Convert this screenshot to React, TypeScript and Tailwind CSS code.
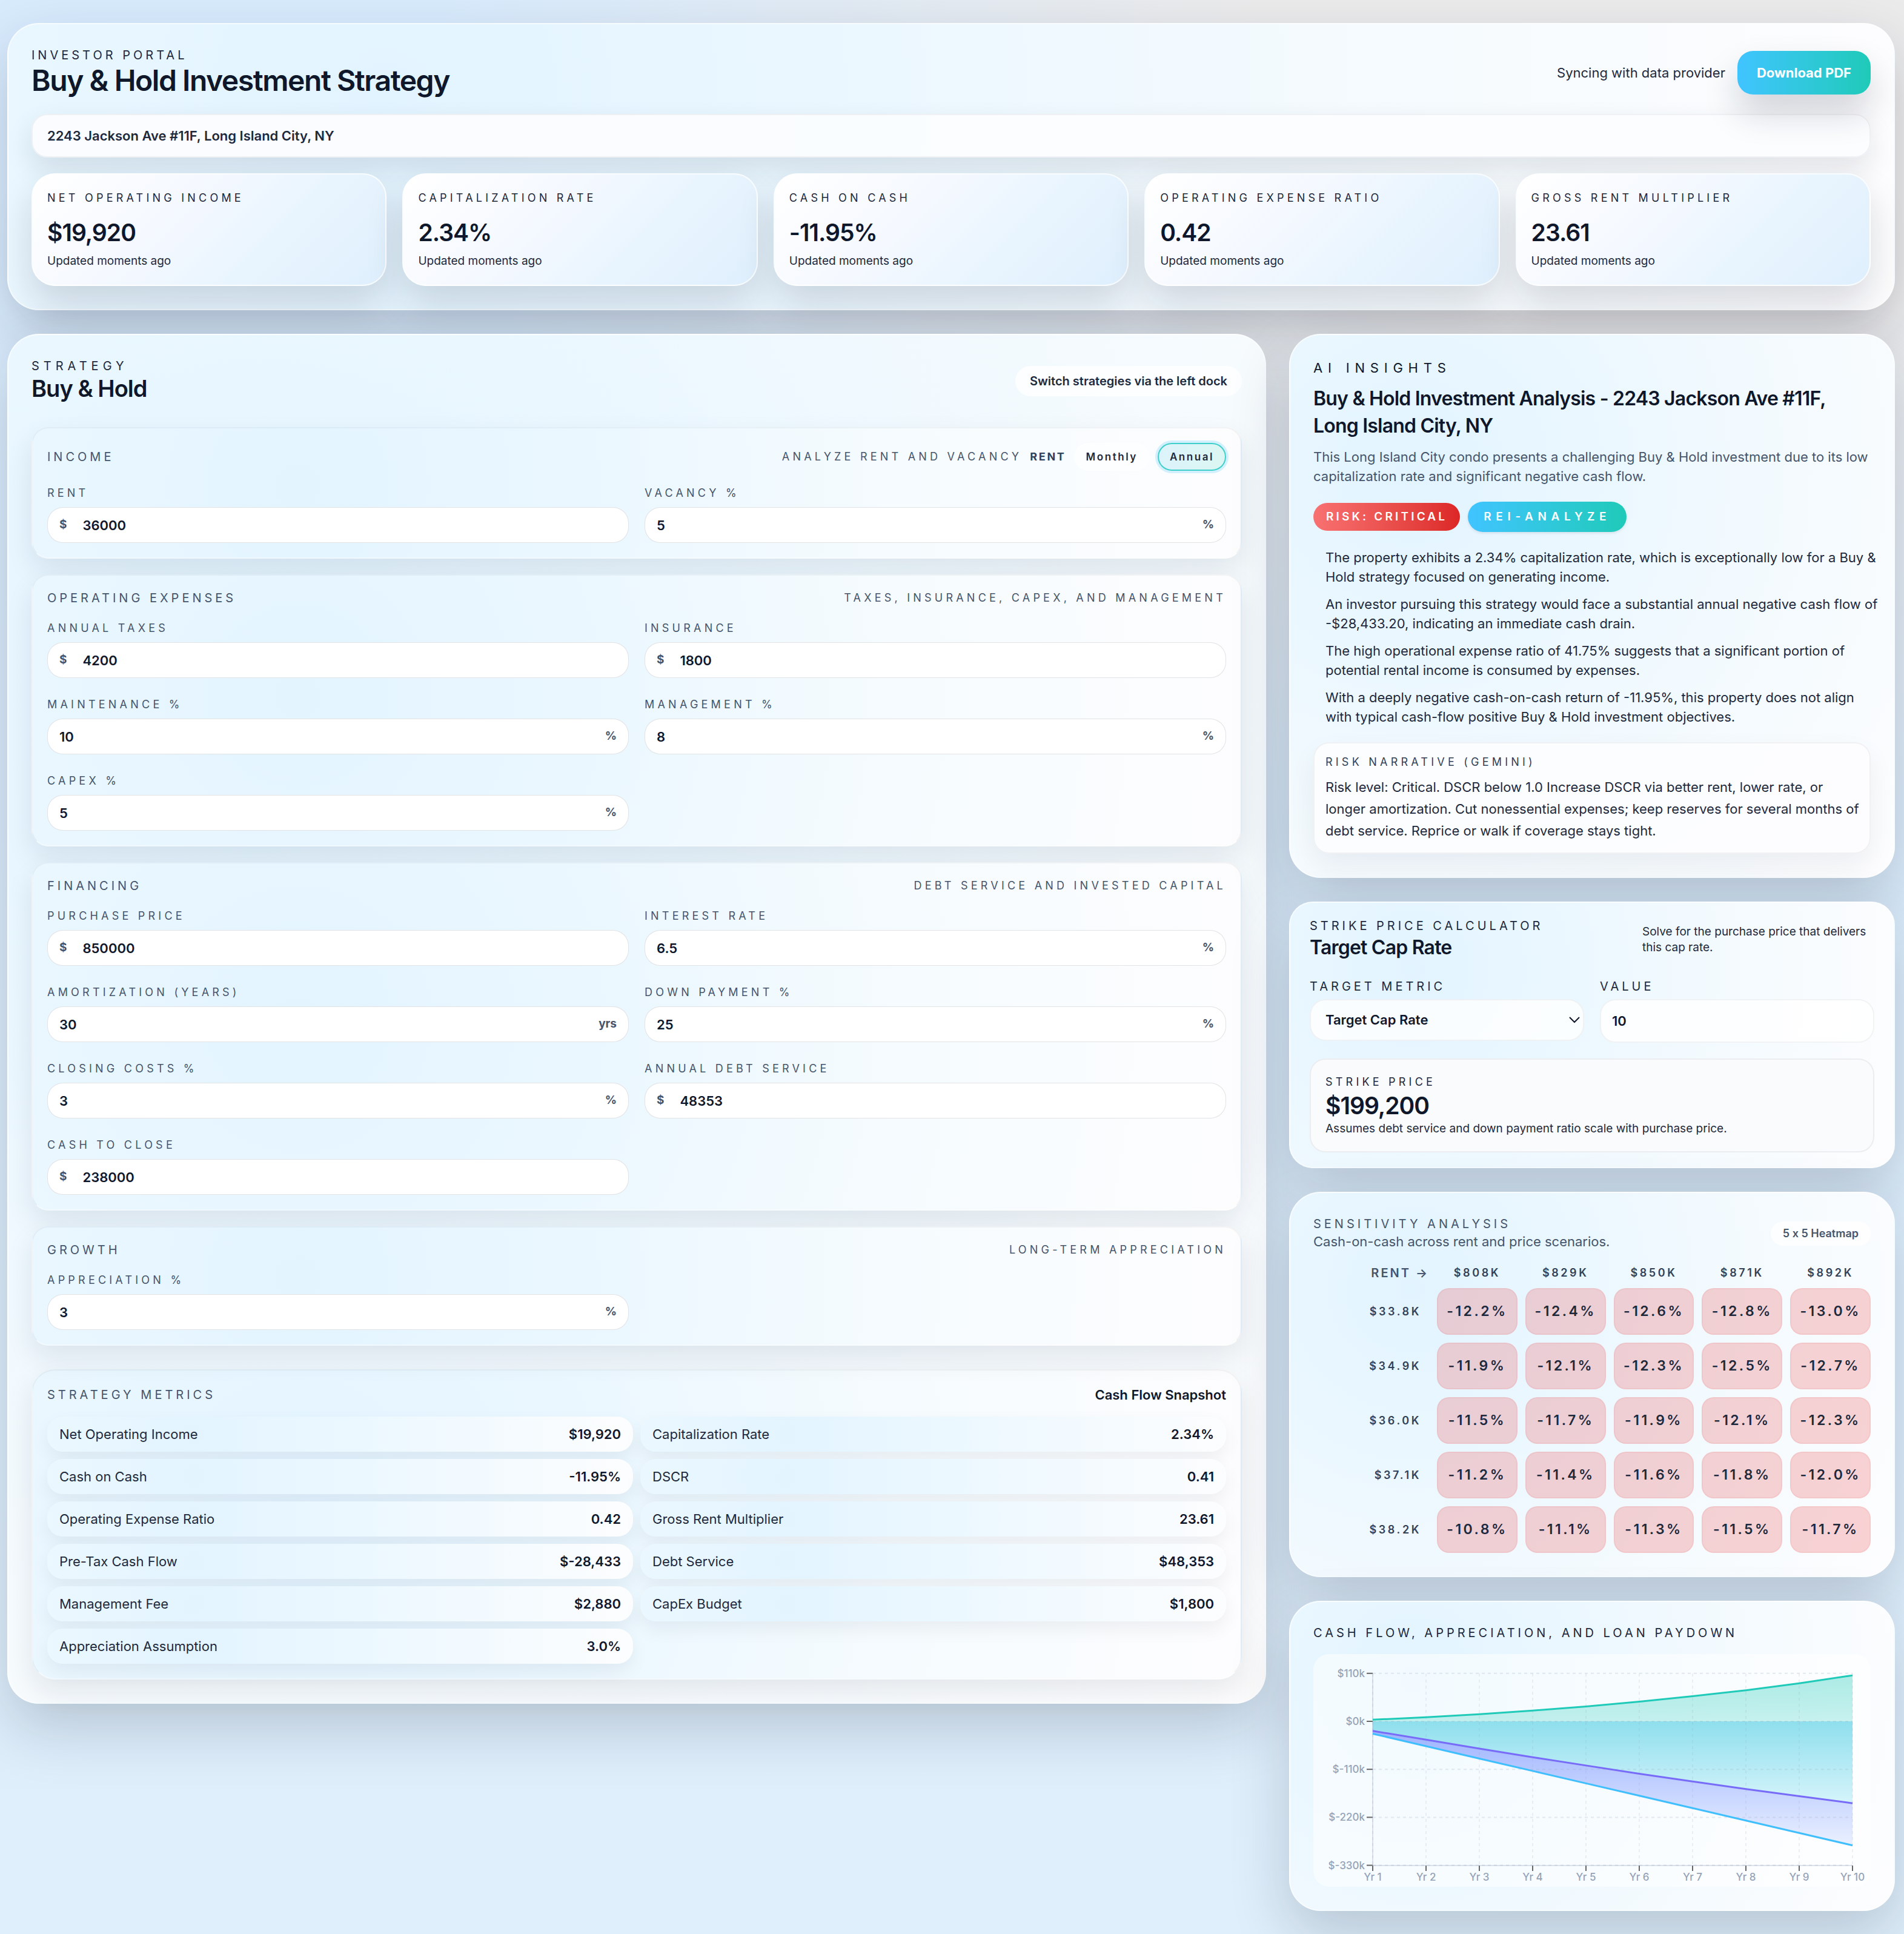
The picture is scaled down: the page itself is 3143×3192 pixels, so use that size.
import { useState } from "react";
import type { ReactNode } from "react";

const PANEL =
  "border-2 border-white/60 bg-[radial-gradient(circle_at_20%_25%,#e2f4ff_0%,#eaf7ff_28%,#f3fafe_58%,#fdfdfe_100%)] shadow-[0_39px_98px_rgba(15,23,42,0.19)]";
const SECTION =
  "border-2 border-slate-900/4 border-b-white/40 bg-[radial-gradient(circle_at_22%_45%,#e3f4ff_0%,#eaf7ff_30%,#f5fbfe_62%,#fdfdfe_100%)] shadow-[0_20px_46px_rgba(15,23,42,0.09)]";
const CAPS = "text-[20px] leading-[26px] tracking-[0.25em] uppercase";
const MINI_CAPS = "text-[18px] leading-[26px] tracking-[0.29em] uppercase";

const kpis = [
  { label: "Net Operating Income", value: "$19,920" },
  { label: "Capitalization Rate", value: "2.34%" },
  { label: "Cash on Cash", value: "-11.95%" },
  { label: "Operating Expense Ratio", value: "0.42" },
  { label: "Gross Rent Multiplier", value: "23.61" },
];

type Field = { id: string; label: string; value: string; prefix?: string; suffix?: string };

const incomeFields: Field[] = [
  { id: "rent", label: "Rent", value: "36000", prefix: "$" },
  { id: "vacancy", label: "Vacancy %", value: "5", suffix: "%" },
];

const expenseFields: Field[] = [
  { id: "taxes", label: "Annual Taxes", value: "4200", prefix: "$" },
  { id: "insurance", label: "Insurance", value: "1800", prefix: "$" },
  { id: "maintenance", label: "Maintenance %", value: "10", suffix: "%" },
  { id: "management", label: "Management %", value: "8", suffix: "%" },
  { id: "capex", label: "CapEx %", value: "5", suffix: "%" },
];

const financingFields: Field[] = [
  { id: "price", label: "Purchase Price", value: "850000", prefix: "$" },
  { id: "rate", label: "Interest Rate", value: "6.5", suffix: "%" },
  { id: "amortization", label: "Amortization (Years)", value: "30", suffix: "yrs" },
  { id: "down", label: "Down Payment %", value: "25", suffix: "%" },
  { id: "closing", label: "Closing Costs %", value: "3", suffix: "%" },
  { id: "debt", label: "Annual Debt Service", value: "48353", prefix: "$" },
  { id: "cash", label: "Cash to Close", value: "238000", prefix: "$" },
];

const growthFields: Field[] = [
  { id: "appreciation", label: "Appreciation %", value: "3", suffix: "%" },
];

const metrics = [
  ["Net Operating Income", "$19,920"],
  ["Capitalization Rate", "2.34%"],
  ["Cash on Cash", "-11.95%"],
  ["DSCR", "0.41"],
  ["Operating Expense Ratio", "0.42"],
  ["Gross Rent Multiplier", "23.61"],
  ["Pre-Tax Cash Flow", "$-28,433"],
  ["Debt Service", "$48,353"],
  ["Management Fee", "$2,880"],
  ["CapEx Budget", "$1,800"],
  ["Appreciation Assumption", "3.0%"],
];

const insights = [
  "The property exhibits a 2.34% capitalization rate, which is exceptionally low for a Buy & Hold strategy focused on generating income.",
  "An investor pursuing this strategy would face a substantial annual negative cash flow of -$28,433.20, indicating an immediate cash drain.",
  "The high operational expense ratio of 41.75% suggests that a significant portion of potential rental income is consumed by expenses.",
  "With a deeply negative cash-on-cash return of -11.95%, this property does not align with typical cash-flow positive Buy & Hold investment objectives.",
];

const heatPrices = ["$808K", "$829K", "$850K", "$871K", "$892K"];
const heatRows = [
  { rent: "$33.8K", cells: ["-12.2%", "-12.4%", "-12.6%", "-12.8%", "-13.0%"] },
  { rent: "$34.9K", cells: ["-11.9%", "-12.1%", "-12.3%", "-12.5%", "-12.7%"] },
  { rent: "$36.0K", cells: ["-11.5%", "-11.7%", "-11.9%", "-12.1%", "-12.3%"] },
  { rent: "$37.1K", cells: ["-11.2%", "-11.4%", "-11.6%", "-11.8%", "-12.0%"] },
  { rent: "$38.2K", cells: ["-10.8%", "-11.1%", "-11.3%", "-11.5%", "-11.7%"] },
];

// Projection values in thousands of dollars, year 1 to 10
const appreciation = [3.7, 9.4, 16.3, 24.6, 34, 45, 57.7, 71.3, 87, 105.4];
const paydown = [-22, -41.9, -62.4, -82.3, -101.2, -120, -137.9, -155.2, -171.4, -187.7];
const cashFlow = [-28.4, -56.9, -85.3, -113.7, -142.2, -170.6, -199, -227.5, -255.9, -284.3];

export default function App() {
  return (
    <div className="min-h-screen bg-[radial-gradient(ellipse_65%_42%_at_88%_3%,#ebebec_0%,#ebebec_35%,#ebebec00_100%),linear-gradient(180deg,#d8ebfd_0%,#d9ebfa_40%,#dfeffb_100%)] pt-[38px] pr-[15px] pb-[38px] pl-3 font-['Inter',sans-serif] text-slate-900">
      <Header />
      <main className="mt-[39px] grid grid-cols-[minmax(0,2078fr)_minmax(0,1000fr)] items-start gap-[38px]">
        <StrategyPanel />
        <aside className="flex min-w-0 flex-col gap-[39px]">
          <InsightsCard />
          <StrikeCard />
          <SensitivityCard />
          <ProjectionCard />
        </aside>
      </main>
    </div>
  );
}

function Header() {
  return (
    <header className={`rounded-[52px] p-[38px] ${PANEL}`}>
      <div className="flex items-center justify-between">
        <div>
          <p className={`${CAPS} text-slate-800`}>Investor Portal</p>
          <h1 className="text-[48px] leading-[58px] font-semibold tracking-[-0.03em]">
            Buy &amp; Hold Investment Strategy
          </h1>
        </div>
        <div className="flex items-center gap-5">
          <span className="text-[22px] leading-8 text-slate-800">Syncing with data provider</span>
          <button
            type="button"
            className="rounded-[26px] bg-linear-to-r from-[#40c4ff] to-[#1fcab8] px-8 py-5 text-[22px] leading-8 font-bold text-white shadow-[0_30px_56px_rgba(15,23,42,0.18)]"
          >
            Download PDF
          </button>
        </div>
      </div>
      <div className="mt-[26px] rounded-[26px] border-2 border-slate-900/5 bg-[#fcfdff]/90 px-6 py-[18px] text-[22px] leading-8 font-semibold text-slate-800 shadow-[0_20px_46px_rgba(15,23,42,0.11)]">
        2243 Jackson Ave #11F, Long Island City, NY
      </div>
      <div className="mt-[26px] grid grid-cols-5 gap-[26px]">
        {kpis.map((kpi) => (
          <div
            key={kpi.label}
            className="rounded-[39px] border-2 border-white/80 bg-[linear-gradient(135deg,#ffffff_0%,#f4f8ff_40%,#e9f5fe_65%,#dfeffd_100%)] px-6 pt-[26px] pb-6 shadow-[0_30px_60px_rgba(15,23,42,0.15)]"
          >
            <p className={`${MINI_CAPS} text-slate-800`}>{kpi.label}</p>
            <p className="mt-[18px] text-[39px] leading-[52px] font-semibold tracking-[-0.025em]">{kpi.value}</p>
            <p className="mt-1.5 text-[19px] leading-[30px] text-slate-800">Updated moments ago</p>
          </div>
        ))}
      </div>
    </header>
  );
}

function StrategyPanel() {
  const [period, setPeriod] = useState("Annual");

  return (
    <section className={`min-w-0 rounded-[52px] p-[38px] ${PANEL}`}>
      <div className="flex items-center justify-between">
        <div>
          <p className="text-[20px] leading-[26px] tracking-[0.35em] text-slate-800 uppercase">Strategy</p>
          <h2 className="text-[38px] leading-[49px] font-semibold tracking-[-0.025em]">Buy &amp; Hold</h2>
        </div>
        <span className="rounded-[26px] bg-white/70 px-6 py-3 text-[20px] leading-[26px] font-semibold text-slate-800">
          Switch strategies via the left dock
        </span>
      </div>

      <div className="mt-[39px] flex flex-col gap-[26px]">
        <FieldSection
          title="Income"
          fields={incomeFields}
          aside={
            <div className="flex items-center gap-[13px]">
              <span className={`${MINI_CAPS} text-slate-600`}>
                Analyze rent and vacancy
              </span>
              <span className="text-[18px] leading-[26px] font-bold tracking-[0.15em] text-slate-700 uppercase">
                Rent
              </span>
              {["Monthly", "Annual"].map((option) => (
                <button
                  key={option}
                  type="button"
                  aria-pressed={period === option}
                  onClick={() => setPeriod(option)}
                  className={`rounded-[23px] border-2 px-[18px] py-2 text-[17px] leading-[26px] font-semibold tracking-[0.15em] text-slate-800 ${
                    period === option
                      ? "border-[#3fcfcb] bg-linear-to-r from-[#dcf3fb] to-[#dbf6f2] shadow-[0_0_0_4px_rgba(64,196,255,0.22)]"
                      : "border-transparent bg-white/60"
                  }`}
                >
                  {option}
                </button>
              ))}
            </div>
          }
        />
        <FieldSection
          title="Operating Expenses"
          fields={expenseFields}
          aside={<SectionNote>Taxes, insurance, CapEx, and management</SectionNote>}
        />
        <FieldSection
          title="Financing"
          fields={financingFields}
          aside={<SectionNote>Debt service and invested capital</SectionNote>}
        />
        <FieldSection
          title="Growth"
          fields={growthFields}
          aside={<SectionNote>Long-term appreciation</SectionNote>}
        />
      </div>

      <div className={`mt-[39px] rounded-[39px] p-6 ${SECTION}`}>
        <div className="flex items-center justify-between">
          <h3 className={`${CAPS} text-slate-600`}>Strategy Metrics</h3>
          <span className="text-[22px] leading-8 font-semibold">Cash Flow Snapshot</span>
        </div>
        <dl className="mt-5 grid grid-cols-2 gap-3">
          {metrics.map(([label, value]) => (
            <div
              key={label}
              className="flex items-center justify-between rounded-[26px] bg-[radial-gradient(circle_at_25%_50%,#e3f4ff_0%,#ecf8ff_40%,#fcfdfe_100%)] px-5 py-[13px] text-[22px] leading-8 shadow-[0_13px_30px_rgba(15,23,42,0.06)]"
            >
              <dt className="text-slate-800">{label}</dt>
              <dd className="font-semibold">{value}</dd>
            </div>
          ))}
        </dl>
      </div>
    </section>
  );
}

function SectionNote({ children }: { children: ReactNode }) {
  return <span className={`${MINI_CAPS} text-slate-600`}>{children}</span>;
}

function FieldSection({ title, fields, aside }: { title: string; fields: Field[]; aside: ReactNode }) {
  return (
    <div className={`rounded-[28px] p-6 ${SECTION}`}>
      <div className="flex items-center justify-between">
        <h3 className={`${CAPS} text-slate-600`}>{title}</h3>
        {aside}
      </div>
      <div className="mt-6 grid grid-cols-2 gap-x-[26px] gap-y-[31px]">
        {fields.map((field) => (
          <div key={field.id} className="flex min-w-0 flex-col gap-2.5">
            <label htmlFor={field.id} className={`${MINI_CAPS} text-slate-600`}>
              {field.label}
            </label>
            <div className="flex h-[59px] items-center gap-[26px] rounded-[26px] border border-slate-900/12 bg-white px-[19px]">
              {field.prefix && <span className="text-[19px] font-bold text-slate-600">{field.prefix}</span>}
              <input
                id={field.id}
                type="text"
                inputMode="decimal"
                defaultValue={field.value}
                className="min-w-0 flex-1 bg-transparent text-[22px] leading-8 font-semibold outline-none"
              />
              {field.suffix && <span className="text-[19px] font-bold text-slate-600">{field.suffix}</span>}
            </div>
          </div>
        ))}
      </div>
    </div>
  );
}

function InsightsCard() {
  return (
    <section className={`rounded-[52px] p-[38px] ${PANEL}`}>
      <p className="text-[22px] leading-8 tracking-[0.4em] uppercase">AI Insights</p>
      <h2 className="mt-3 text-[32px] leading-[45px] font-semibold tracking-[-0.025em]">
        Buy &amp; Hold Investment Analysis - 2243 Jackson Ave #11F, Long Island City, NY
      </h2>
      <p className="mt-[13px] text-[22px] leading-8 text-slate-600">
        This Long Island City condo presents a challenging Buy &amp; Hold investment due to its low
        capitalization rate and significant negative cash flow.
      </p>
      <div className="mt-[26px] flex items-center gap-[13px]">
        <span className="rounded-[26px] bg-linear-to-r from-[#f87171] to-[#dc2626] px-[21px] py-2.5 text-[19px] leading-[26px] font-semibold tracking-[0.22em] text-white uppercase">
          Risk: Critical
        </span>
        <button
          type="button"
          className="rounded-[26px] bg-linear-to-r from-[#40c4ff] to-[#1fcab8] px-[26px] py-3 text-[19px] leading-[26px] font-semibold tracking-[0.4em] text-white uppercase shadow-[0_2px_4px_rgba(15,23,42,0.1)]"
        >
          REI-Analyze
        </button>
      </div>
      <ul className="mt-[26px] -mr-4 flex flex-col gap-[13px] pl-5">
        {insights.map((text) => (
          <li key={text} className="text-[22px] leading-8 text-slate-800">
            {text}
          </li>
        ))}
      </ul>
      <div className="mt-[26px] rounded-[26px] border-2 border-slate-900/5 bg-[#fdfdff]/90 py-[18px] pr-2 pl-[18px] shadow-[0_20px_46px_rgba(15,23,42,0.06)]">
        <p className={`${MINI_CAPS} text-slate-700`}>Risk Narrative (Gemini)</p>
        <p className="mt-2.5 text-[22px] leading-9 text-slate-800">
          Risk level: Critical. DSCR below 1.0 Increase DSCR via better rent, lower rate, or longer
          amortization. Cut nonessential expenses; keep reserves for several months of debt service.
          Reprice or walk if coverage stays tight.
        </p>
      </div>
    </section>
  );
}

function StrikeCard() {
  return (
    <section className={`rounded-[39px] px-8 pt-[25px] pb-6 ${PANEL}`}>
      <div className="flex items-center justify-between">
        <div>
          <p className={`${CAPS} text-slate-800`}>Strike Price Calculator</p>
          <h2 className="text-[32px] leading-[45px] font-semibold tracking-[-0.025em]">Target Cap Rate</h2>
        </div>
        <p className="max-w-[383px] text-[19px] leading-[26px] text-slate-800">
          Solve for the purchase price that delivers this cap rate.
        </p>
      </div>
      <div className="mt-[26px] grid grid-cols-2 items-start gap-[26px]">
        <div className="flex min-w-0 flex-col gap-[5px]">
          <label htmlFor="metric" className="text-[20px] leading-8 tracking-[0.25em] text-slate-800 uppercase">
            Target Metric
          </label>
          <div className="relative">
            <select
              id="metric"
              className="h-[69px] w-full appearance-none rounded-[26px] border-2 border-slate-900/5 bg-white/80 px-6 text-[22px] font-semibold"
            >
              <option>Target Cap Rate</option>
            </select>
            <svg
              className="pointer-events-none absolute top-[29px] right-[7px] h-[11px] w-[18px]"
              viewBox="0 0 18 11"
              fill="none"
              stroke="#0f172a"
              strokeWidth="2"
            >
              <path d="M1 1l8 8 8-8" />
            </svg>
          </div>
        </div>
        <div className="flex min-w-0 flex-col gap-[5px]">
          <label htmlFor="target" className="text-[20px] leading-8 tracking-[0.25em] text-slate-800 uppercase">
            Value
          </label>
          <input
            id="target"
            type="text"
            inputMode="decimal"
            defaultValue="10"
            className="h-[72px] w-full rounded-[26px] border-2 border-slate-900/5 bg-white/80 px-[18px] text-[22px] font-semibold outline-none"
          />
        </div>
      </div>
      <div className="mt-[26px] rounded-[26px] border-2 border-slate-900/6 bg-[#fafbfc] p-6">
        <p className={`${MINI_CAPS} text-slate-800`}>Strike Price</p>
        <p className="text-[39px] leading-[51px] font-semibold tracking-[-0.025em]">$199,200</p>
        <p className="text-[19px] leading-[26px] text-slate-800">
          Assumes debt service and down payment ratio scale with purchase price.
        </p>
      </div>
    </section>
  );
}

function SensitivityCard() {
  return (
    <section className={`rounded-[52px] p-[38px] ${PANEL}`}>
      <div className="flex items-center justify-between">
        <div>
          <h2 className={`${CAPS} text-slate-600`}>Sensitivity Analysis</h2>
          <p className="text-[22px] leading-8 text-slate-600">Cash-on-cash across rent and price scenarios.</p>
        </div>
        <span className="rounded-[20px] bg-white/80 px-5 py-[7px] text-[18px] leading-[26px] font-semibold text-slate-600 [font-variant-ligatures:no-contextual]">
          5 x 5 Heatmap
        </span>
      </div>
      <div className="-mx-[13px] mt-[11px] -mb-[13px]">
        <table className="w-full table-fixed border-separate border-spacing-[13px]">
          <thead>
            <tr className="text-[18px] leading-[24px] text-slate-700">
              <th scope="col" className="w-[191px] p-0 text-right text-[20px] font-semibold tracking-[0.15em] text-slate-600">
                RENT →
              </th>
              {heatPrices.map((price) => (
                <th key={price} scope="col" className="p-0 font-semibold tracking-[0.2em]">
                  {price}
                </th>
              ))}
            </tr>
          </thead>
          <tbody>
            {heatRows.map((row) => (
              <tr key={row.rent}>
                <th
                  scope="row"
                  className="p-0 pr-[13px] text-right text-[18px] font-semibold tracking-[0.2em] text-slate-700"
                >
                  {row.rent}
                </th>
                {row.cells.map((cell) => (
                  <td
                    key={cell}
                    className="h-[77px] rounded-[20px] border-2 border-[#dc2626]/6 bg-[#ef4444]/23 p-0 text-center text-[23px] font-semibold tracking-[0.15em] text-slate-800"
                  >
                    {cell}
                  </td>
                ))}
              </tr>
            ))}
          </tbody>
        </table>
      </div>
    </section>
  );
}

const px = (i: number) => 98 + i * 88;
const py = (v: number) => 111 - v * 0.72;
const line = (values: number[]) => values.map((v, i) => `${px(i)},${py(v)}`).join(" ");
const band = (a: number[], b: number[]) =>
  `${line(a)} ${b.map((v, i) => `${px(i)},${py(v)}`).reverse().join(" ")}`;
const zero = appreciation.map(() => 0);

function ProjectionCard() {
  return (
    <section className={`rounded-[52px] p-[38px] ${PANEL}`}>
      <h2 className={`${CAPS} text-slate-800`}>Cash Flow, Appreciation, and Loan Paydown</h2>
      <div className="mt-[22px] rounded-[26px] bg-white/55">
        <svg viewBox="0 0 920 384" className="block w-full" role="img" aria-label="Ten year projection">
          <defs>
            <linearGradient id="gain" gradientUnits="userSpaceOnUse" x1="0" y1="36" x2="0" y2="111">
              <stop offset="0" stopColor="#1fcab8" stopOpacity="0.36" />
              <stop offset="1" stopColor="#1fcab8" stopOpacity="0.24" />
            </linearGradient>
            <linearGradient id="equity" gradientUnits="userSpaceOnUse" x1="0" y1="111" x2="0" y2="247">
              <stop offset="0" stopColor="#8fdfed" />
              <stop offset="1" stopColor="#d6f4fb" />
            </linearGradient>
            <linearGradient id="loss" gradientUnits="userSpaceOnUse" x1="0" y1="125" x2="0" y2="318">
              <stop offset="0" stopColor="#9db3ff" />
              <stop offset="1" stopColor="#ebf1ff" />
            </linearGradient>
          </defs>

          <polygon points={band(appreciation, zero)} fill="url(#gain)" />
          <polygon points={band(zero, paydown)} fill="url(#equity)" />
          <polygon points={band(paydown, cashFlow)} fill="url(#loss)" />

          {[110, 0, -110, -220, -330].map((v) => (
            <g key={v}>
              <line x1="98" x2="890" y1={py(v)} y2={py(v)} stroke="#94a3b8" strokeOpacity="0.22" strokeWidth="2" strokeDasharray="5 5" />
              <line x1="88" x2="98" y1={py(v)} y2={py(v)} stroke="#666666" strokeWidth="2" />
              <text x="85" y={py(v) + 6} textAnchor="end" fontSize="17" fontWeight="500" fill="#94a3b8">
                {`$${v}k`}
              </text>
            </g>
          ))}
          {zero.map((_, i) => (
            <g key={i}>
              <line x1={px(i)} x2={px(i)} y1="32" y2="349" stroke="#94a3b8" strokeOpacity="0.3" strokeWidth="1" strokeDasharray="5 5" />
              <line x1={px(i)} x2={px(i)} y1="349" y2="358" stroke="#666666" strokeWidth="2" />
              <text x={px(i)} y="374" textAnchor="middle" fontSize="17" fontWeight="500" fill="#94a3b8">
                {`Yr ${i + 1}`}
              </text>
            </g>
          ))}
          <path d="M98 32V349H890" fill="none" stroke="#94a3b8" strokeOpacity="0.3" strokeWidth="2" />

          <polyline points={line(appreciation)} fill="none" stroke="#1fcab8" strokeWidth="3" />
          <polyline points={line(cashFlow)} fill="none" stroke="#40bfff" strokeWidth="3" />
          <polyline points={line(paydown)} fill="none" stroke="#776bf8" strokeWidth="3" />
        </svg>
      </div>
    </section>
  );
}
